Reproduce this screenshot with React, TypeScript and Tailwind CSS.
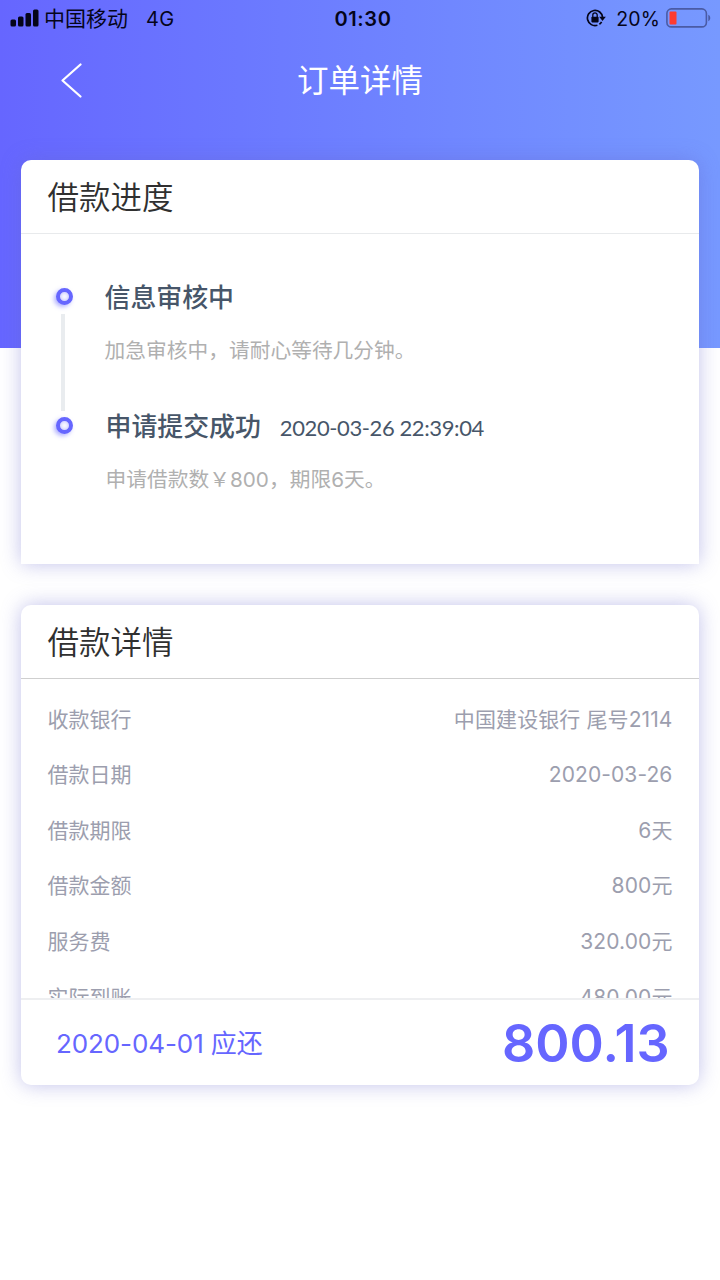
import { clsx } from 'clsx'

const steps = [
	{
		title: '信息审核中',
		time: '',
		desc: '加急审核中，请耐心等待几分钟。',
	},
	{
		title: '申请提交成功',
		time: '2020-03-26 22:39:04',
		desc: '申请借款数￥800，期限6天。',
	},
]

const details = [
	{ label: '收款银行', value: '中国建设银行 尾号2114' },
	{ label: '借款日期', value: '2020-03-26' },
	{ label: '借款期限', value: '6天' },
	{ label: '借款金额', value: '800元' },
	{ label: '服务费', value: '320.00元' },
	{ label: '实际到账', value: '480.00元' },
]

function StatusBar() {
	return (
		<div className="flex h-9 items-center justify-between pl-[10px] pr-[9px] text-[20px] leading-9 text-[#05051a]">
			<div className="flex w-[260px] items-center">
				<svg width="29" height="18" viewBox="0 0 29 18" fill="currentColor">
					<rect x="0.5" y="10.5" width="5.5" height="7" rx="1.5" />
					<rect x="8" y="7.5" width="5.5" height="10" rx="1.5" />
					<rect x="15.5" y="4" width="5.5" height="13.5" rx="1.5" />
					<rect x="23" y="0.5" width="5.5" height="17" rx="1.5" />
				</svg>
				<span className="ml-[5px] pt-px text-[21px]">中国移动</span>
				<span className="ml-[18px] pt-px tracking-[0.3px]">4G</span>
			</div>
			<span className="pl-[5px] pt-px font-semibold tracking-[0.6px]">01:30</span>
			<div className="flex w-[260px] items-center justify-end">
				<svg width="20" height="18" viewBox="0 0 20 18" fill="none" stroke="currentColor">
					<path d="M11.4 16.2A7.6 7.6 0 1 1 16.6 8.4" strokeWidth="1.7" />
					<path d="M13.4 15.2A7.6 7.6 0 0 0 15.6 12.9" strokeWidth="1.7" />
					<path d="M13.2 7.8h6.6l-3.3 4.2z" fill="currentColor" stroke="none" />
					<rect x="5.4" y="7.8" width="7.2" height="5.6" rx="0.8" fill="currentColor" stroke="none" />
					<path d="M6.8 8V6.1a2.2 2.2 0 0 1 4.4 0V8" strokeWidth="1.3" />
				</svg>
				<span className="ml-[10px] pt-px text-[19.5px] tracking-[0.1px]">20%</span>
				<svg className="ml-[6px]" width="45" height="20" viewBox="0 0 45 20" fill="none">
					<rect x="0.9" y="0.9" width="39.5" height="18" rx="4.5" stroke="#4a5ba5" strokeWidth="1.6" />
					<rect x="3.5" y="3.5" width="7" height="13" rx="1" fill="#ff3b30" />
					<path d="M42.3 6.8c2.6 1 2.6 5.4 0 6.4z" fill="#4a5ba5" />
				</svg>
			</div>
		</div>
	)
}

function CardTitle({ children, className }: { children: string; className?: string }) {
	return (
		<h2
			className={clsx(
				'h-[74px] border-b pl-[26.5px] pt-px text-[31.5px] font-[350] leading-[73px] text-[#303030]',
				className,
			)}
		>
			{children}
		</h2>
	)
}

function Dot() {
	return (
		<span className="h-[17px] w-[17px] shrink-0 rounded-full border-4 border-[#6666ff] bg-white shadow-[-2px_2px_4px_rgba(102,102,255,0.5),inset_0_0_4px_rgba(102,102,255,0.5)]" />
	)
}

export default function App() {
	return (
		<div
			lang="zh-CN"
			className="h-[1280px] w-[720px] overflow-hidden bg-white font-['Inter','Noto_Sans_CJK_SC',sans-serif]"
		>
			<header className="h-[348px] bg-linear-to-r from-[#6666ff] to-[#7799ff]">
				<StatusBar />
				<div className="flex h-[90px] items-center px-[60px]">
					<svg width="24" height="36" viewBox="0 0 24 36" fill="none" stroke="#fff" strokeWidth="2.2">
						<path d="M20.5 1.5L2.5 17.5l18 16" strokeLinecap="round" strokeLinejoin="round" />
					</svg>
					<h1 className="flex-1 pr-6 text-center text-[31.5px] leading-none text-white">订单详情</h1>
				</div>
			</header>

			<main className="relative -mt-[188px] space-y-[41px] px-[21px]">
				<section className="h-[404px] rounded-t-[10px] bg-white shadow-[0_0_20px_rgba(102,102,204,0.4)]">
					<CardTitle className="border-[#e8eaec]">借款进度</CardTitle>
					<div className="pl-[35px] pt-[43px]">
						{steps.map((step, i) => (
							<div key={step.title} className="flex h-[129px]">
								<div className="flex w-[48.5px] flex-col pt-[11px]">
									<Dot />
									{i === 0 && <span className="ml-[5px] mt-[9px] h-[97px] w-[3.5px] shrink-0 bg-[#e9ecef]" />}
								</div>
								<div className={clsx(i > 0 && 'pl-px')}>
									<div className="flex h-[42px] items-center text-[#475669]">
										<h3 className="text-[25.9px] font-medium">{step.title}</h3>
										<time className="ml-[19px] font-['Lato'] text-[22px] tracking-[-0.4px]">
											{step.time}
										</time>
									</div>
									<p className="mt-[17px] text-[20.7px] font-[380] leading-[30px] tracking-[0.05px] text-[#b0b0b0]">
										{step.desc}
									</p>
								</div>
							</div>
						))}
					</div>
				</section>

				<section className="h-[480px] overflow-hidden rounded-[10px] bg-white shadow-[0_0_20px_rgba(102,102,204,0.4)]">
					<CardTitle className="border-[#cfcfcf]">借款详情</CardTitle>
					<dl className="h-[319px] overflow-hidden px-[26.5px] pt-[12.5px] text-[21px] font-[380] text-[#9c9eae]">
						{details.map((item) => (
							<div key={item.label} className="flex h-[55.6px] items-center justify-between">
								<dt>{item.label}</dt>
								<dd className="tracking-[0.1px]">{item.value}</dd>
							</div>
						))}
					</dl>
					<div className="flex h-[87px] items-center justify-between border-t-2 border-[#eeeff1] pl-[35px] pr-[29.5px] pt-px text-[#6666ff]">
						<span className="text-[26px] font-[380] tracking-[-0.1px]">2020-04-01 应还</span>
						<span className="pt-px text-[52px] font-semibold">800.13</span>
					</div>
				</section>
			</main>
		</div>
	)
}
